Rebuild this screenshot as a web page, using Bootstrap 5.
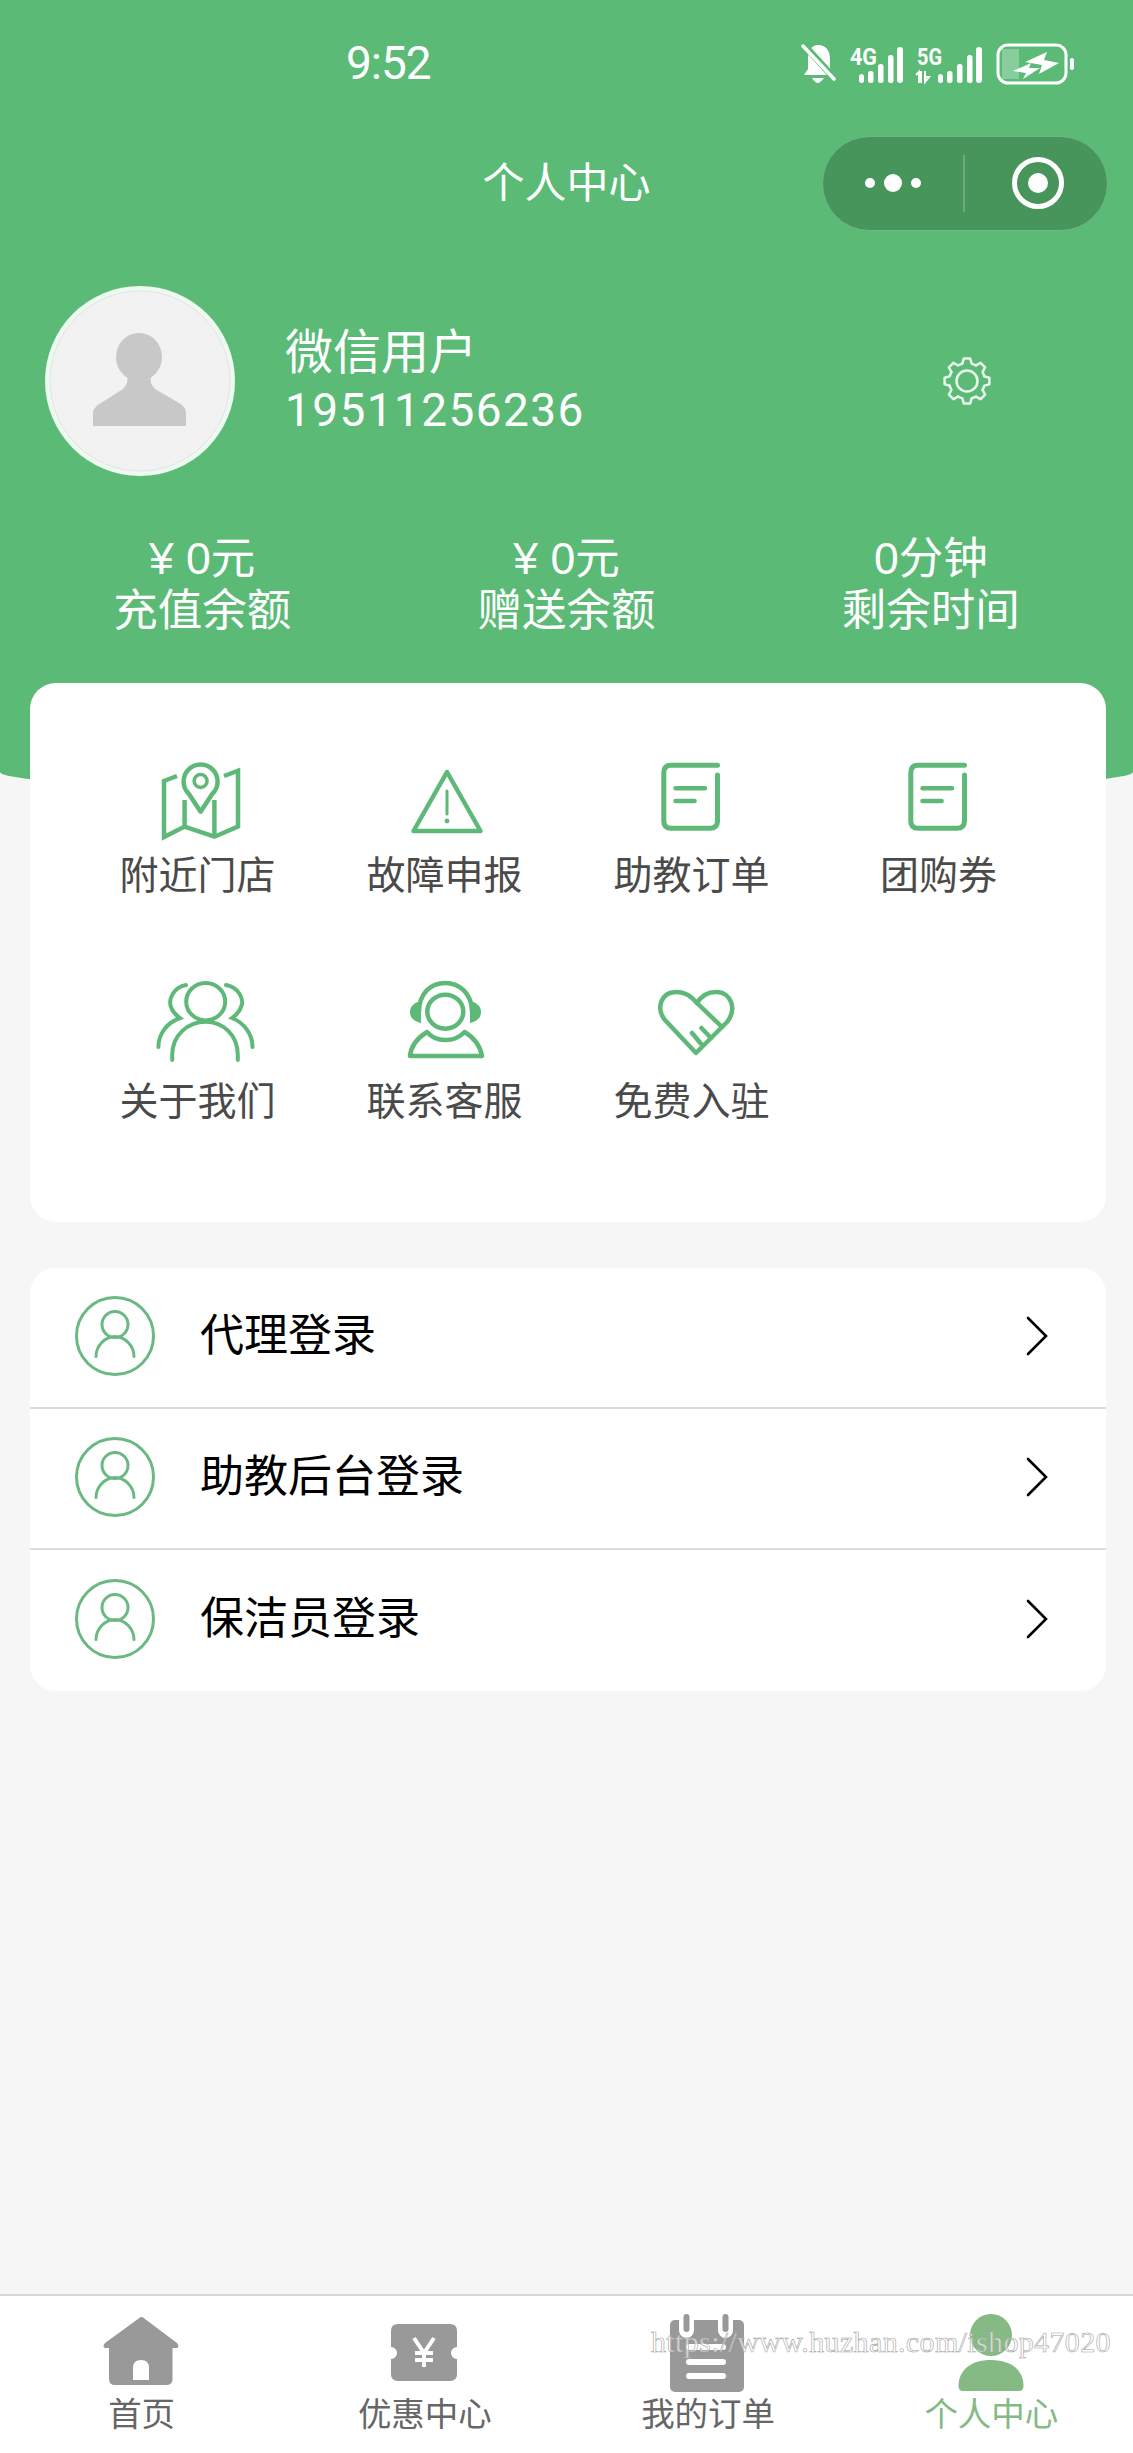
<!DOCTYPE html>
<html lang="zh-CN">
<head>
    <meta charset="UTF-8">
    <meta name="viewport" content="width=device-width, initial-scale=1.0">
    <title>个人中心</title>
    <link href="https://cdn.jsdelivr.net/npm/bootstrap@5.3.0/dist/css/bootstrap.min.css" rel="stylesheet">
    <style>
        body { margin: 0; background: #f6f6f6; font-family: "Liberation Sans", "Noto Sans CJK SC", sans-serif; }
        .app-page { position: relative; width: 1133px; height: 2453px; overflow: hidden; background: #f6f6f6; }

        .hero { height: 794px; background: #5bbb76; color: #fff; border-radius: 0 0 50% 50% / 0 0 22px 22px; }
        .status-row { height: 126px; padding-left: 346px; padding-right: 52px; }
        .status-time { font-family: Roboto, sans-serif; font-size: 46px; letter-spacing: -1px; line-height: 1; }
        .title-row { display: grid; grid-template-columns: 286px 1fr 286px; align-items: center; height: 95px; margin-top: 10px; padding: 0 25px; }
        .page-title { font-size: 42px; line-height: 1; text-align: center; }
        .capsule { width: 286px; height: 95px; border-radius: 48px; background: #47955b; border: 1px solid #6cb983; }
        .profile-row { margin-top: 55px; padding-left: 45px; padding-right: 142px; }
        .profile-info { margin-left: 2px; }
        .profile-name { font-size: 48px; line-height: 58px; }
        .profile-phone { font-family: Roboto, sans-serif; font-size: 46px; line-height: 58px; letter-spacing: 1.4px; margin-top: -1px; }
        .stats-row { margin: 57px 20px 0; }
        .stat-line { font-size: 44.5px; line-height: 52px; text-align: center; }

        .panel { margin: -111px 27px 0 30px; height: 539px; padding: 68px 44px 0; border: 0; border-radius: 26px; background: #fff; }
        .tile { height: 226px; text-align: center; color: #4a4a4a; }
        .tile-label { font-size: 39px; line-height: 50px; margin-top: 4px; }

        .login-card { margin: 46px 27px 0 30px; border: 0; border-radius: 26px; overflow: hidden; }
        .list-group-flush > .login-item { display: flex; align-items: center; height: 141px; padding: 0 58px 4px 45px; border-width: 0 0 2px; border-style: solid; border-color: #dcdcdc; background: #fff; color: #000; font-size: 44px; }
        .list-group-flush > .login-item:last-child { border-bottom-width: 0; }
        .login-label { margin-left: 45px; }

        .tab-bar { position: absolute; left: 0; right: 0; bottom: 0; height: 159px; padding-top: 14px; background: #fff; border-top: 2px solid #d6d6d6; }
        .tab-label { font-size: 33.5px; line-height: 44px; color: #666; text-align: center; margin-top: -1px; }
        .tab-on { color: #85ba85; }

        .water-mark { position: absolute; left: 651px; top: 2322px; font-family: "Liberation Serif", serif; font-size: 30px; letter-spacing: .36px; line-height: 40px; color: rgba(255,255,255,.6); -webkit-text-stroke: .6px #a4a4a4; white-space: nowrap; }
        svg { display: block; }
        .tile svg, .tab-item svg { margin: 0 auto; }
    </style>
</head>
<body>
<div class="app-page">

    <div class="hero">
        <div class="status-row d-flex align-items-center justify-content-between">
            <span class="status-time">9:52</span>
            <svg width="280" height="44" viewBox="0 0 280 44" fill="#fff">
                <!-- muted bell -->
                <path d="M17 4 C26 4 29 11 29 18 V28 L33 34 H3 L7 28 V18 C7 11 10 4 17 4 Z"/>
                <path d="M11 37 H23 Q19 42 17 42 Q14 42 11 37 Z"/>
                <path d="M3 4 L34 38" stroke="#5bbb76" stroke-width="7"/>
                <path d="M2 5 L33 38" stroke="#fff" stroke-width="3.5" stroke-linecap="round"/>
                <!-- 4G -->
                <text x="49" y="24" font-family="Roboto, sans-serif" font-weight="700" font-size="24" textLength="27" lengthAdjust="spacingAndGlyphs">4G</text>
                <rect x="58" y="33" width="5" height="9" rx="2.5"/><rect x="67" y="30" width="5.5" height="12" rx="2.5"/><rect x="77" y="23" width="5.5" height="19" rx="2.5"/><rect x="87" y="14" width="5.5" height="28" rx="2.5"/><rect x="96" y="6" width="6" height="36" rx="3"/>
                <!-- 5G -->
                <text x="116" y="24" font-family="Roboto, sans-serif" font-weight="700" font-size="24" textLength="25" lengthAdjust="spacingAndGlyphs">5G</text>
                <path d="M118 42 V31 L115 34 M118 31 H120 V42 M124 30 V41 L128 36 H124" stroke="#fff" stroke-width="2" fill="none"/>
                <rect x="137" y="33" width="5" height="9" rx="2.5"/><rect x="146" y="30" width="5.5" height="12" rx="2.5"/><rect x="156" y="23" width="5.5" height="19" rx="2.5"/><rect x="166" y="14" width="5.5" height="28" rx="2.5"/><rect x="175" y="6" width="6" height="36" rx="3"/>
                <!-- battery -->
                <rect x="197" y="4" width="68" height="38" rx="10" fill="none" stroke="#fff" stroke-width="3"/>
                <path d="M201 8 H218 V38 H201 Z" fill="#fff" opacity=".28"/>
                <path d="M212 30 L230 22 L228 27 L239 27 L222 38 L225 32 Z"/>
                <path d="M224 21 L246 11 L243 19 L258 22 L238 33 L241 24 Z"/>
                <rect x="269" y="17" width="4" height="12" rx="2"/>
            </svg>
        </div>

        <div class="title-row">
            <span></span>
            <span class="page-title">个人中心</span>
            <div class="capsule d-flex align-items-center">
                <svg width="284" height="93" viewBox="0 0 284 93">
                    <circle cx="47" cy="46" r="5" fill="#fff"/>
                    <circle cx="70" cy="46" r="9" fill="#fff"/>
                    <circle cx="93" cy="46" r="5" fill="#fff"/>
                    <path d="M141 18 V75" stroke="#fff" stroke-opacity=".28" stroke-width="1.5"/>
                    <circle cx="215" cy="46" r="23.5" fill="none" stroke="#fff" stroke-width="5"/>
                    <circle cx="215" cy="46" r="10" fill="#fff"/>
                </svg>
            </div>
        </div>

        <div class="profile-row d-flex align-items-center justify-content-between">
            <div class="d-flex align-items-center gap-5">
                <svg width="190" height="190" viewBox="0 0 190 190">
                    <circle cx="95" cy="95" r="95" fill="#ecfaef"/>
                    <circle cx="95" cy="95" r="90" fill="#f2f2f3" stroke="#dcdcdc" stroke-width=".7"/>
                    <ellipse cx="94" cy="71" rx="23" ry="24" fill="#c8c8c8"/>
                    <path d="M48 140 V126 Q49 121 56 117 L78 103 Q84 98 82 88 H106 Q104 98 110 103 L134 117 Q141 121 141 127 V140 Z" fill="#c8c8c8"/>
                </svg>
                <div class="profile-info">
                    <div class="profile-name">微信用户</div>
                    <div class="profile-phone">19511256236</div>
                </div>
            </div>
            <svg width="48" height="48" viewBox="0 0 48 48" fill="none" stroke="#e8f7ec" stroke-width="2.5" stroke-linejoin="round" stroke-linecap="round">
                <g id="gearTooth"><path d="M19.34 6.61 L20.8 1.6 H27.2 L28.66 6.61 L33 8.41"/></g>
                <use href="#gearTooth" transform="rotate(45 24 24)"/>
                <use href="#gearTooth" transform="rotate(90 24 24)"/>
                <use href="#gearTooth" transform="rotate(135 24 24)"/>
                <use href="#gearTooth" transform="rotate(180 24 24)"/>
                <use href="#gearTooth" transform="rotate(225 24 24)"/>
                <use href="#gearTooth" transform="rotate(270 24 24)"/>
                <use href="#gearTooth" transform="rotate(315 24 24)"/>
                <circle cx="24" cy="24" r="10.5"/>
            </svg>
        </div>

        <div class="row g-0 stats-row">
            <div class="col-4 stat-line">¥ 0元<br>充值余额</div>
            <div class="col-4 stat-line">¥ 0元<br>赠送余额</div>
            <div class="col-4 stat-line">0分钟<br>剩余时间</div>
        </div>
    </div>

    <div class="card panel">
        <div class="row g-0">
            <div class="col-3 tile">
                <svg width="100" height="96" viewBox="0 0 100 96" fill="none" stroke="#5eb978" stroke-width="4.5">
                    <path d="M29 25 L16 30 V86 L36.6 75.6 L66.4 85.7 L90 75.6 V19.7 L76 25"/>
                    <path d="M36.6 75.6 V49 M66.4 85.7 V49"/>
                    <path d="M52.6 60.7 L41 43 A17 17 0 1 1 64.2 43 Z" stroke-linejoin="round"/>
                    <circle cx="52.6" cy="30" r="6.5" stroke-width="3.5"/>
                </svg>
                <div class="tile-label">附近门店</div>
            </div>
            <div class="col-3 tile">
                <svg width="100" height="96" viewBox="0 0 100 96" fill="none" stroke="#5eb978" stroke-width="4.5" stroke-linejoin="round">
                    <path d="M52 21 L85.5 80 H18.5 Z"/>
                    <path d="M52 40 V63" stroke-width="3" stroke-linecap="round"/>
                    <circle cx="52" cy="70" r="2.4" fill="#5eb978" stroke="none"/>
                </svg>
                <div class="tile-label">故障申报</div>
            </div>
            <div class="col-3 tile">
                <svg width="100" height="96" viewBox="0 0 100 96" fill="none" stroke="#5eb978" stroke-width="5" stroke-linecap="round">
                    <path d="M75.5 14.3 H29 Q21.8 14.3 21.8 21.5 V70 Q21.8 77.3 29 77.3 H68 Q75.5 77.3 75.5 70 V24"/>
                    <path d="M33.5 37.3 H63 M33.5 50 H52.6" stroke-width="4.5"/>
                </svg>
                <div class="tile-label">助教订单</div>
            </div>
            <div class="col-3 tile">
                <svg width="100" height="96" viewBox="0 0 100 96" fill="none" stroke="#5eb978" stroke-width="5" stroke-linecap="round">
                    <path d="M75.5 14.3 H29 Q21.8 14.3 21.8 21.5 V70 Q21.8 77.3 29 77.3 H68 Q75.5 77.3 75.5 70 V24"/>
                    <path d="M33.5 37.3 H63 M33.5 50 H52.6" stroke-width="4.5"/>
                </svg>
                <div class="tile-label">团购券</div>
            </div>
            <div class="col-3 tile">
                <svg width="120" height="96" viewBox="-10 0 120 96" fill="none" stroke="#5eb978" stroke-width="4" stroke-linecap="round">
                    <ellipse cx="57.7" cy="24.7" rx="19.5" ry="18.7"/>
                    <path d="M24.2 83 V78 C24.2 58 40 44.7 57.7 44.7 C75 44.7 89.8 58 89.8 78 V83"/>
                    <path d="M38 8 C26 10 20 22 23 30 C25 36 28 38 32 41 C18 46 10.4 58 10.4 70"/>
                    <path d="M78 8 C90 10 97 22 93 30 C91 36 88 38 84 41 C97 46 104.5 58 104.5 70"/>
                </svg>
                <div class="tile-label">关于我们</div>
            </div>
            <div class="col-3 tile">
                <svg width="100" height="96" viewBox="0 0 100 96" fill="none" stroke="#5eb978" stroke-width="4.5" stroke-linejoin="round">
                    <ellipse cx="50.3" cy="34.7" rx="18" ry="17"/>
                    <path d="M24 35 C24 16 36 6 50.3 6 C64 6 77 16 77 35" stroke-width="4.5"/>
                    <path d="M26 24 C18 26 15 30 15 35 C15 40 18 44 26 46 Z" fill="#5eb978" stroke="none"/>
                    <path d="M75 24 C83 26 86 30 86 35 C86 40 83 44 75 46 Z" fill="#5eb978" stroke="none"/>
                    <path d="M15 79 C16 68 24 60 32 55 C38 62 44 63 50.3 63 C57 63 63 62 69.6 55 C78 60 85 68 87 79 Z"/>
                </svg>
                <div class="tile-label">联系客服</div>
            </div>
            <div class="col-3 tile">
                <svg width="100" height="96" viewBox="0 0 100 96" fill="none" stroke="#5eb978" stroke-width="4.5" stroke-linejoin="round" stroke-linecap="round">
                    <path d="M54 76 L23 43 C14 32 18 15 35 15 C44 15 50 20 55 26 C60 18 66 15 74 15 C90 15 95 33 85 45 Z"/>
                    <path d="M55 26 L80 50 M50 56 L60 68 M59.4 51 L69 61"/>
                </svg>
                <div class="tile-label">免费入驻</div>
            </div>
        </div>
    </div>

    <div class="card login-card">
        <div class="list-group list-group-flush">
            <a class="list-group-item login-item">
                <svg width="80" height="80" viewBox="0 0 80 80" fill="none" stroke="#6cb883" stroke-width="3" stroke-linecap="round"><circle cx="40" cy="40" r="38.5"/><circle cx="40" cy="28.5" r="13"/><path d="M21 60.5 C21 50 30 40.5 40 40.5 C50 40.5 59 50 59 60.5"/></svg>
                <span class="login-label">代理登录</span>
                <svg class="ms-auto" width="22" height="40" viewBox="0 0 22 40" fill="none" stroke="#000" stroke-width="2.6" stroke-linecap="round"><path d="M2 2 L20 20 L2 38"/></svg>
            </a>
            <a class="list-group-item login-item">
                <svg width="80" height="80" viewBox="0 0 80 80" fill="none" stroke="#6cb883" stroke-width="3" stroke-linecap="round"><circle cx="40" cy="40" r="38.5"/><circle cx="40" cy="28.5" r="13"/><path d="M21 60.5 C21 50 30 40.5 40 40.5 C50 40.5 59 50 59 60.5"/></svg>
                <span class="login-label">助教后台登录</span>
                <svg class="ms-auto" width="22" height="40" viewBox="0 0 22 40" fill="none" stroke="#000" stroke-width="2.6" stroke-linecap="round"><path d="M2 2 L20 20 L2 38"/></svg>
            </a>
            <a class="list-group-item login-item">
                <svg width="80" height="80" viewBox="0 0 80 80" fill="none" stroke="#6cb883" stroke-width="3" stroke-linecap="round"><circle cx="40" cy="40" r="38.5"/><circle cx="40" cy="28.5" r="13"/><path d="M21 60.5 C21 50 30 40.5 40 40.5 C50 40.5 59 50 59 60.5"/></svg>
                <span class="login-label">保洁员登录</span>
                <svg class="ms-auto" width="22" height="40" viewBox="0 0 22 40" fill="none" stroke="#000" stroke-width="2.6" stroke-linecap="round"><path d="M2 2 L20 20 L2 38"/></svg>
            </a>
        </div>
    </div>

    <div class="row g-0 tab-bar">
        <div class="col-3 tab-item">
            <svg width="100" height="84" viewBox="0 0 100 84" fill="#999">
                <path d="M46 9 Q49.5 5 53 9 L85 33 Q88 37 85 38 H80.5 V69 Q80.5 75 74 75 H23 Q17 75 17 69 V38 H13 Q10 37 13 33 Z"/>
                <path d="M41 70 V58 Q41 50 49 50 Q57 50 57 58 V70 Z" fill="#fff"/>
            </svg>
            <div class="tab-label">首页</div>
        </div>
        <div class="col-3 tab-item">
            <svg width="100" height="84" viewBox="0 0 100 84" fill="#999">
                <path d="M23 14 H75 Q82 14 82 21 V37 A6 6 0 0 0 82 49 V64 Q82 71 75 71 H23 Q16 71 16 64 V49 A6 6 0 0 0 16 37 V21 Q16 14 23 14 Z"/>
                <path d="M39 28 L49 43 L59 28 M49 43 V57 M40 43 H58 M40 50 H58" fill="none" stroke="#fff" stroke-width="4"/>
            </svg>
            <div class="tab-label">优惠中心</div>
        </div>
        <div class="col-3 tab-item">
            <svg width="100" height="84" viewBox="0 0 100 84" fill="#999">
                <rect x="12" y="10" width="74" height="72" rx="5"/>
                <rect x="21" y="4" width="15" height="24" rx="7.5" fill="#fff"/>
                <rect x="60" y="4" width="15" height="24" rx="7.5" fill="#fff"/>
                <rect x="25.5" y="4" width="6" height="18" rx="3"/>
                <rect x="64.5" y="4" width="6" height="18" rx="3"/>
                <rect x="28" y="34" width="40" height="6" rx="3" fill="#fff"/>
                <rect x="28" y="49" width="40" height="6" rx="3" fill="#fff"/>
                <rect x="28" y="63" width="40" height="6" rx="3" fill="#fff"/>
            </svg>
            <div class="tab-label">我的订单</div>
        </div>
        <div class="col-3 tab-item">
            <svg width="100" height="84" viewBox="0 0 100 84" fill="#85ba85">
                <circle cx="50" cy="25" r="21"/>
                <path d="M17.5 76 C17.5 60 30 50 50 50 C70 50 82.5 60 82.5 76 Q82.5 81 78 81 H22 Q17.5 81 17.5 76 Z"/>
            </svg>
            <div class="tab-label tab-on">个人中心</div>
        </div>
    </div>

    <div class="water-mark">https://www.huzhan.com/ishop47020</div>
</div>
<script src="https://cdn.jsdelivr.net/npm/bootstrap@5.3.0/dist/js/bootstrap.bundle.min.js"></script>
</body>
</html>
